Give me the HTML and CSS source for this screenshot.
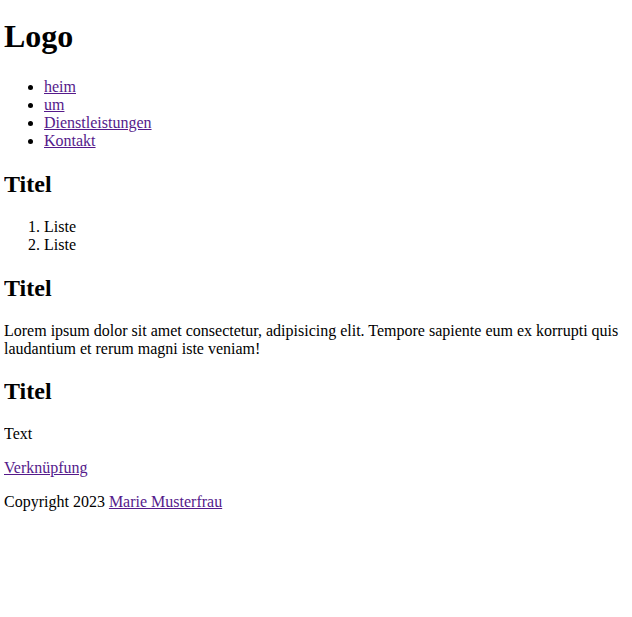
FILE: index.html
```html
<!DOCTYPE html>
<html lang="de">
<head>
<meta charset="utf-8">
<title>Logo</title>
<link rel="stylesheet" href="styles.css">
</head>
<body class="page">
<header class="site-header">
  <h1 class="logo">Logo</h1>
  <nav class="nav">
    <ul class="nav-list">
      <li><a class="link" href="#">heim</a></li>
      <li><a class="link" href="#">um</a></li>
      <li><a class="link" href="#">Dienstleistungen</a></li>
      <li><a class="link" href="#">Kontakt</a></li>
    </ul>
  </nav>
</header>
<main class="content">
  <section class="section">
    <h2 class="title">Titel</h2>
    <ol class="num-list">
      <li>Liste</li>
      <li>Liste</li>
    </ol>
  </section>
  <section class="section">
    <h2 class="title">Titel</h2>
    <p class="text">Lorem ipsum dolor sit amet consectetur, adipisicing elit. Tempore sapiente eum ex korrupti quis laudantium et rerum magni iste veniam!</p>
  </section>
  <section class="section">
    <h2 class="title">Titel</h2>
    <p class="text">Text</p>
    <p class="text"><a class="link" href="#">Verknüpfung</a></p>
  </section>
</main>
<footer class="footer">
  <p class="text">Copyright 2023 <a class="link" href="#">Marie Musterfrau</a></p>
</footer>
</body>
</html>
```
FILE: styles.css
```css
html, body {
  background: #ffffff;
}
.page {
  margin: 4px;
  font-family: "Liberation Serif", "Times New Roman", serif;
  font-size: 16px;
  line-height: 18px;
  color: #000000;
}
.logo {
  font-size: 32px;
  line-height: 28px;
  font-weight: bold;
  margin: 18.44px 0 27.44px;
}
.nav-list, .num-list {
  margin: 16px 0;
  padding-left: 40px;
}
.title {
  font-size: 24px;
  line-height: 28px;
  font-weight: bold;
  margin: 19.92px 0;
}
.text {
  margin: 16px 0;
}
.link {
  color: #551a8b;
  text-decoration: underline;
}
```
